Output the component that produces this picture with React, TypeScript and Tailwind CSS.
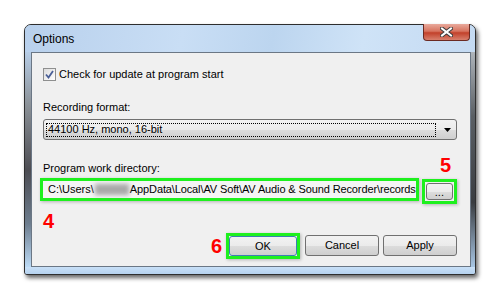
import React from "react";

const green = "border-[3px] border-[#1ef01e]";

function Btn({
  label,
  focused,
  className = "",
}: {
  label: string;
  focused?: boolean;
  className?: string;
}) {
  return (
    <div
      className={`flex items-center justify-center rounded-[3px] border ${
        focused ? "border-[#3c7fb1]" : "border-[#707070]"
      } bg-[linear-gradient(#f2f2f2_0%,#ebebeb_50%,#dddddd_51%,#cfcfcf_100%)] text-[11px] text-black ${className}`}
    >
      {label}
    </div>
  );
}

function CloseButton() {
  return (
    <div className="-mt-px mr-[5px] ml-auto flex h-[17px] w-[47px] items-center justify-center rounded-b-[4px] border border-t-0 border-[#6b2a22] bg-[linear-gradient(#e9a99c_0%,#d7735f_45%,#c2412b_55%,#d8806d_100%)]">
      <svg width="13" height="10" viewBox="0 0 13 10">
        <path
          d="M2 1.5 L11 8.5 M11 1.5 L2 8.5"
          stroke="#3b3b3b"
          strokeWidth="4"
          strokeLinecap="square"
        />
        <path
          d="M2 1.5 L11 8.5 M11 1.5 L2 8.5"
          stroke="#ffffff"
          strokeWidth="2"
          strokeLinecap="square"
        />
      </svg>
    </div>
  );
}

export default function App() {
  return (
    <div className="h-[300px] w-[500px] overflow-hidden bg-white pt-[24px] pl-[24px] font-['Liberation_Sans',sans-serif]">
      <div className="flex h-[251px] w-[452px] flex-col rounded-t-[7px] rounded-b-[3px] border border-[#2e2e2e] bg-[#c0d8f1] shadow-[2px_3px_4px_rgba(0,0,0,0.6)]">
        {/* title bar */}
        <div className="flex h-[27px] items-start rounded-t-[6px] bg-[linear-gradient(100deg,#b8d0ec_0%,#c9def5_35%,#bcd5ef_55%,#cfe3f7_75%,#c4daf2_100%)]">
          <span className="pt-[7px] pl-[8px] text-[12px] leading-[14px] text-black">
            Options
          </span>
          <CloseButton />
        </div>

        <div className="flex flex-1">
          <div className="w-[6px] bg-[linear-gradient(#b7cde6,#8a9096_25%,#4c4c52_55%,#6d7d8e_80%,#bcdaf5)]" />

          {/* client area */}
          <div className="flex w-[440px] flex-col border border-[#6b7785] bg-[#f0f0f0] pt-[15px] pr-[13px] pl-[11px] text-[11px] leading-[13px] text-black">
            <div className="flex h-[13px] items-center gap-[3px]">
              <div className="flex h-[13px] w-[13px] items-center justify-center border border-[#8e8f8f] bg-[linear-gradient(135deg,#dcdcdc,#ffffff)]">
                <svg width="9" height="9" viewBox="0 0 9 9">
                  <path
                    d="M1 4.5 L3.5 7.5 L8 1"
                    fill="none"
                    stroke="#4a5f97"
                    strokeWidth="1.8"
                  />
                </svg>
              </div>
              <span>Check for update at program start</span>
            </div>

            <div className="mt-[20px]">Recording format:</div>

            <div className="mt-[5px] flex h-[21px] items-center rounded-[3px] border border-[#707070] bg-[linear-gradient(#f2f2f2_0%,#ebebeb_50%,#dddddd_51%,#cfcfcf_100%)] pr-[4px] pl-[2px]">
              <div className="flex h-[14px] flex-1 items-center border border-dotted border-black pl-[1px]">
                44100 Hz, mono, 16-bit
              </div>
              <svg className="mr-[1px] ml-[8px]" width="7" height="4" viewBox="0 0 7 4">
                <path d="M0 0 H7 L3.5 4 Z" fill="#000" />
              </svg>
            </div>

            <div className="mt-[15px] flex h-[20px] items-end">
              <span className="flex-1">Program work directory:</span>
              <span className="mr-[6px] text-[20px] leading-[20px] font-bold text-[#ff0000]">
                5
              </span>
            </div>

            <div className="mt-[3px] -ml-[3px] flex items-start">
              <div
                className={`flex h-[23px] w-[380px] items-center ${green} bg-[#f4f4f4] pl-[5px] whitespace-nowrap shadow-[1px_1px_3px_rgba(0,0,0,0.25)]`}
              >
                C:\Users\
                <span className="mx-[1px] inline-block h-[11px] w-[34px] bg-[#a9a9a9] blur-[2px]" />
                <span className="tracking-[-0.12px]">
                  AppData\Local\AV Soft\AV Audio &amp; Sound Recorder\records
                </span>
              </div>
              <div
                className={`mt-[1px] ml-[3px] flex h-[25px] w-[37px] ${green} p-[1px] shadow-[1px_1px_3px_rgba(0,0,0,0.25)]`}
              >
                <Btn label="..." className="h-full w-full leading-[10px]" />
              </div>
            </div>

            <div className="mt-[7px] h-[20px] text-[20px] leading-[20px] font-bold text-[#ff0000]">
              4
            </div>

            <div className="mt-[2px] flex items-start justify-end">
              <span className="mt-[3px] mr-[4px] text-[20px] leading-[20px] font-bold text-[#ff0000]">
                6
              </span>
              <div className={`h-[26px] w-[74px] ${green} p-0 shadow-[1px_1px_3px_rgba(0,0,0,0.25)]`}>
                <Btn label="OK" focused className="h-full w-full" />
              </div>
              <Btn label="Cancel" className="mt-[2px] ml-[5px] h-[21px] w-[74px]" />
              <Btn label="Apply" className="mt-[2px] ml-[4px] h-[21px] w-[74px]" />
            </div>
          </div>

          <div className="w-[4px] bg-[linear-gradient(#aeb4ba,#5a5f64_30%,#3a3d41_70%,#a8c6e4)]" />
        </div>

        <div className="h-[7px] rounded-b-[2px] bg-[linear-gradient(#c8e0f8,#b6d2ee)]" />
      </div>
    </div>
  );
}
